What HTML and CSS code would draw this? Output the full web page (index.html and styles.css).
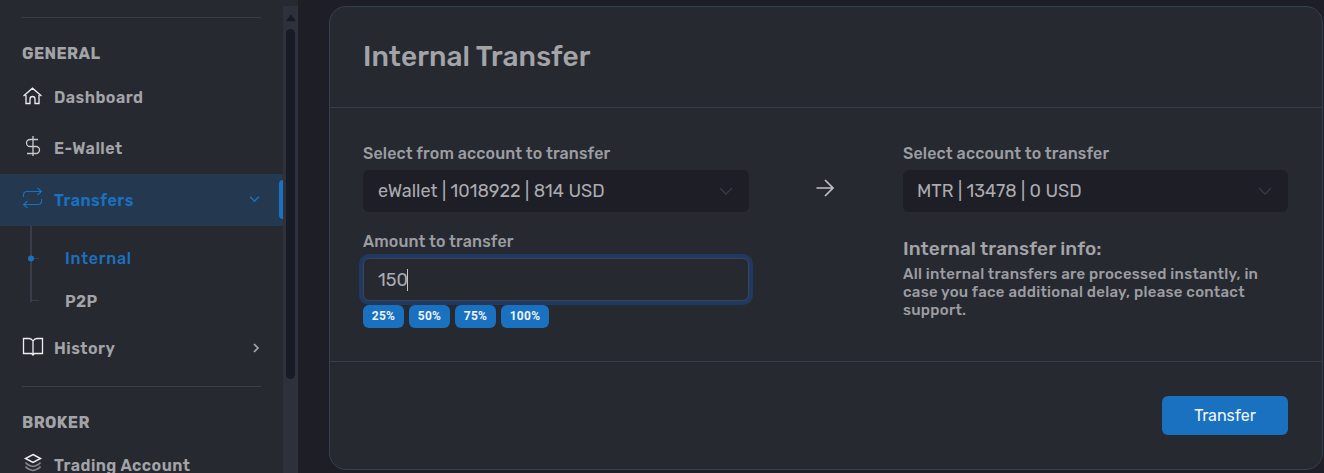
FILE: index.html
```html
<!DOCTYPE html>
<html lang="en">
<head>
<meta charset="utf-8">
<title>Internal Transfer</title>
<link rel="stylesheet" href="styles.css">
</head>
<body>
<div class="app">
  <aside class="sidebar">
    <nav class="nav">
      <div class="rule"></div>
      <h2 class="heading heading-general"><span>GENERAL</span></h2>
      <a class="item item-dashboard">
        <svg class="icon icon-home" viewBox="0 0 20 18"><path d="M1 9 10 1.2 19 9M3.5 8v8.5h4V12a2.5 2.5 0 0 1 5 0v4.500h4V8"/></svg>
        <span>Dashboard</span>
      </a>
      <a class="item item-wallet">
        <svg class="icon icon-dollar" viewBox="0 0 20 22"><path d="M10.500 1v20M15.500 4.500H7.500a3.500 3.500 0 0 0 0 7h6a3.500 3.500 0 0 1 0 7H4.500"/></svg>
        <span>E-Wallet</span>
      </a>
      <a class="item item-transfers">
        <svg class="icon icon-repeat" viewBox="0 0 20 22"><path d="M1 10V8a3.500 3.500 0 0 1 3.500-3.500H19M15 1l4 3.500L15 8M19 12v2a3.500 3.500 0 0 1-3.500 3.500H1M5 14l-4 3.500L5 21"/></svg>
        <span>Transfers</span>
        <svg class="chevron chevron-down" viewBox="0 0 10 10"><path d="m1 3 4 4 4-4"/></svg>
      </a>
      <div class="submenu">
        <svg class="tree" viewBox="0 0 12 76"><path class="trunk" d="M4 0v76"/><path class="branch" d="M4 32.500h8M4 74.500h8"/><circle cx="4" cy="32.500" r="3"/></svg>
        <div class="sublist">
          <a class="sub active"><span>Internal</span></a>
          <a class="sub"><span>P2P</span></a>
        </div>
      </div>
      <a class="item item-history">
        <svg class="icon icon-book" viewBox="0 0 22 20"><path d="M11 19v-4.500M11 15.500V4Q9.500 1.500 7 1.500H1.500v15H9.500L11 18l1.500-1.500h8v-15H15Q12.500 1.500 11 4"/></svg>
        <span>History</span>
        <svg class="chevron chevron-right" viewBox="0 0 10 12"><path d="m3 2 4 4-4 4"/></svg>
      </a>
      <div class="rule"></div>
      <h2 class="heading heading-broker"><span>BROKER</span></h2>
      <a class="item item-trading">
        <svg class="icon icon-layers" viewBox="0 0 20 20"><path class="dim" d="M2.500 9.500Q4 12 10 13.500q6-1.500 7.500-4M2.500 13.500Q4 16 10 17.500q6-1.500 7.500-4"/><path d="M10 1.500 17.500 5.500 10 9.500 2.500 5.500Z"/></svg>
        <span>Trading Account</span>
      </a>
    </nav>
    <div class="scrollbar">
      <svg class="scroll-arrow" viewBox="0 0 9 7"><path d="M4.500 1 8 6H1Z"/></svg>
      <div class="thumb"></div>
    </div>
  </aside>
  <main class="card">
    <header class="card-header"><h1>Internal Transfer</h1></header>
    <div class="card-body">
      <section class="from">
        <label class="label"><span>Select from account to transfer</span></label>
        <div class="select"><span>eWallet | 1018922 | 814 USD</span><svg class="caret" viewBox="0 0 14 10"><path d="m1 2 6 6 6-6"/></svg></div>
        <label class="label label-amount"><span>Amount to transfer</span></label>
        <div class="amount"><span>150</span><i class="cursor"></i></div>
        <div class="badges">
          <span class="badge">25%</span><span class="badge">50%</span><span class="badge">75%</span><span class="badge badge-full">100%</span>
        </div>
      </section>
      <svg class="arrow" viewBox="0 0 20 20"><path d="M1.500 10h16M10 2l8 8-8 8"/></svg>
      <section class="to">
        <label class="label"><span>Select account to transfer</span></label>
        <div class="select"><span>MTR | 13478 | 0 USD</span><svg class="caret" viewBox="0 0 14 10"><path d="m1 2 6 6 6-6"/></svg></div>
        <h3 class="info-title"><span>Internal transfer info:</span></h3>
        <p class="info">All internal transfers are processed instantly, in<br>case you face additional delay, please contact<br>support.</p>
      </section>
    </div>
    <footer class="card-footer"><button class="submit"><span>Transfer</span></button></footer>
  </main>
</div>
</body>
</html>
```
FILE: styles.css
```css
* { box-sizing: border-box; }
body {
  margin: 0;
  overflow: hidden;
  background: #1e1e27;
  color: #a3a4a7;
  font-family: Rubik, Roboto, "Liberation Sans", sans-serif;
}
h1, h2, h3, p { margin: 0; }
svg { display: block; flex: none; fill: none; }
.app { display: flex; gap: 31px; height: 473px; }
.sidebar { display: flex; width: 298px; background: #272931; overflow: hidden; }
.nav { width: 283px; padding-top: 17px; }
.rule { height: 1px; margin: 0 22px; background: #3b3e46; }
.heading { display: flex; align-items: center; padding-left: 22px; font-size: 16px; font-weight: 700; letter-spacing: .4px; }
.heading-general { height: 54px; margin: 8px 0 -9px; }
.item {
  display: flex; align-items: center; height: 52px; padding-left: 22px;
  font-size: 16px; font-weight: 600; letter-spacing: .48px;
}
.icon { width: 21px; margin-right: 11px; stroke: #eeeeef; stroke-width: 1.3; }
.icon-home { height: 18px; margin-top: -3px; }
.icon-dollar { height: 22px; margin-top: -5px; stroke: #c9cacc; }
.icon-repeat { height: 22px; margin-top: -4px; stroke: #1971bf; stroke-width: 1.1; }
.icon-book { width: 22px; height: 20px; margin-top: -3px; margin-right: 10px; }
.icon-layers { width: 22px; height: 20px; margin-top: -4px; margin-right: 10px; stroke-width: 1.5; }
.icon-layers .dim { stroke: #85868a; }
.item-wallet { height: 51px; }
.item-transfers {
  position: relative; background: #24384f; color: #1971bf;
}
.item-transfers::after {
  content: ""; position: absolute; right: 0; top: 6px; width: 4px; height: 39px;
  border-radius: 4px 0 0 4px; background: #1971bf;
}
.chevron { width: 10px; height: 12px; margin-left: auto; margin-right: 22px; stroke: #a6a7aa; stroke-width: 1.7; }
.chevron-down { width: 11px; margin-right: 23px; margin-top: -2px; stroke: #1971bf; stroke-width: 1.4; }
.submenu { display: flex; height: 96px; padding-left: 27px; gap: 26px; }
.tree { width: 12px; height: 76px; }
.trunk { stroke: #3a3c4a; stroke-width: 2; }
.branch { stroke: #3a3c4a; }
.tree circle { fill: #1971bf; }
.sublist { padding-top: 11px; }
.sub { display: flex; align-items: center; height: 43px; font-size: 16px; font-weight: 600; letter-spacing: .4px; }
.sub.active { color: #1971bf; font-weight: 500; letter-spacing: .75px; }
.item-history { margin-bottom: 12px; }
.heading-broker { height: 71px; }
.item-trading { margin-top: -19px; }
.scrollbar {
  display: flex; flex-direction: column; align-items: center;
  width: 15px; margin-top: 6px; background: #2e313b;
}
.scroll-arrow { width: 10px; height: 8px; margin: 8px 0 7px; fill: #191b24; stroke: #191b24; stroke-linejoin: round; }
.thumb { width: 9px; height: 350px; border-radius: 5px; background: #191b24; }
.card {
  display: flex; flex-direction: column; width: 994px; height: 464px; margin-top: 6px;
  border: 1px solid #34404f; border-radius: 17px; background: #272931;
}
.card-header { display: flex; align-items: center; height: 101px; padding-left: 33px; border-bottom: 1px solid #34404f; }
h1 { font-size: 28px; font-weight: 500; line-height: 34px; letter-spacing: .08px; }
.card-body { display: flex; height: 253px; padding: 35px 34px 0 33px; }
.from, .to { flex: none; width: 386px; }
.to { width: 385px; }
.label { display: flex; align-items: center; height: 21px; margin-bottom: 6px; font-size: 16px; font-weight: 500; letter-spacing: .14px; color: #9c9da1; }
.select, .amount {
  display: flex; align-items: center; height: 42px; padding: 0 15px; border-radius: 6px;
  background: #1e1e27; color: #abacaf; font-size: 18px;
}
.to .select { padding-left: 14px; }
.caret { width: 14px; height: 10px; margin-left: auto; margin-right: 1px; stroke: #343b47; stroke-width: 1.4; }
.label-amount { margin-top: 19px; }
.amount { height: 43px; border: 1px solid #3a4658; padding-left: 14px; background: #272931; box-shadow: 0 0 0 4px #203962; }
.cursor { width: 1px; height: 22px; margin-left: -1px; background: #c5c6c8; }
.badges { display: flex; gap: 5px; margin-top: 4px; }
.badge {
  display: flex; align-items: center; justify-content: center; width: 41px; height: 23px; padding-bottom: 1px;
  border-radius: 6px; background: #1971bf; color: #eef3f8;
  font-family: Roboto, sans-serif; font-size: 12px; font-weight: 700; letter-spacing: .3px;
}
.badge-full { width: 48px; }
.arrow { width: 20px; height: 20px; margin: 35px 68px 0 66px; stroke: #c0c1c4; stroke-width: 1.7; }
.info-title { display: flex; align-items: center; height: 24px; margin-top: 24px; font-size: 19px; font-weight: 500; letter-spacing: .1px; }
.info { margin-top: 5px; font-size: 15px; font-weight: 500; line-height: 18px; letter-spacing: .26px; color: #9c9da1; white-space: nowrap; }
.card-footer { display: flex; justify-content: flex-end; height: 108px; padding: 34px 34px 0; border-top: 1px solid #34404f; }
.submit {
  width: 126px; height: 39px; border: 0; border-radius: 6px; background: #1971bf;
  color: #f2f6fa; font-family: inherit; font-size: 16px;
}
```
